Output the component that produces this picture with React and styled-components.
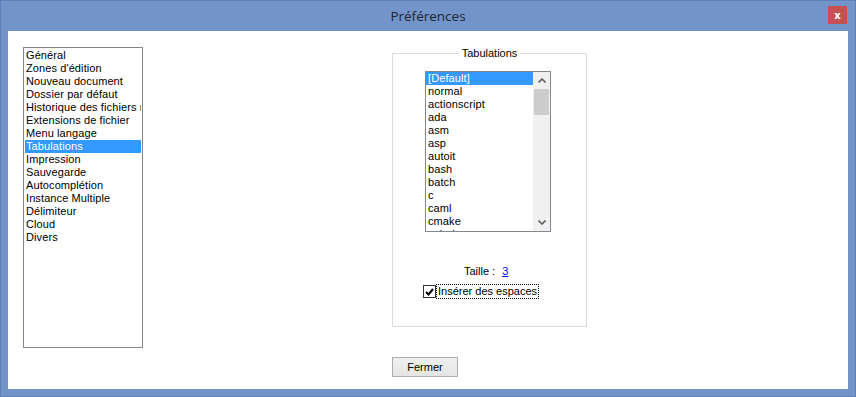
import styled, { createGlobalStyle } from 'styled-components'

const Global = createGlobalStyle`
  html, body {
    margin: 0;
    padding: 0;
    overflow: hidden;
    background: #7394c8;
  }
`

const Frame = styled.div`
  width: 856px;
  height: 397px;
  box-sizing: border-box;
  display: flex;
  flex-direction: column;
  background: #7394c8;
  box-shadow: inset 0 0 0 1px #5f80b8;
  font-family: "Liberation Sans", Arial, sans-serif;
  font-size: 11px;
  color: #000;
`

const TitleBar = styled.div`
  position: relative;
  height: 31px;
  flex-shrink: 0;
  display: flex;
  align-items: center;
  justify-content: center;
`

const Title = styled.div`
  font-family: "Open Sans", "Noto Sans", sans-serif;
  font-size: 13.5px;
  color: #1a2536;
  margin-top: 1px;
`

const CloseButton = styled.div`
  position: absolute;
  top: 6px;
  right: 9px;
  width: 19px;
  height: 18px;
  background: #c75050;
  display: flex;
  align-items: center;
  justify-content: center;
  color: #fff;
  font-family: "DejaVu Sans", sans-serif;
  font-weight: bold;
  font-size: 10px;
`

const Content = styled.div`
  flex: 1;
  margin: 0 8px 8px;
  background: #fff;
  padding: 16px 0 0 15px;
  display: flex;
  align-items: flex-start;
`

const SideList = styled.div`
  width: 120px;
  height: 301px;
  box-sizing: border-box;
  border: 1px solid #828790;
  padding: 1px;
  overflow: hidden;
`

const Row = styled.div`
  height: 13px;
  line-height: 13px;
  padding-left: ${p => p.$indent || 1}px;
  white-space: nowrap;
  overflow: hidden;
  letter-spacing: 0.1px;
  background: ${p => (p.$selected ? '#3399ff' : 'transparent')};
  color: ${p => (p.$selected ? '#fff' : '#000')};
`

const RightCol = styled.div`
  margin-left: 249px;
  display: flex;
  flex-direction: column;
  align-items: flex-start;
`

const Group = styled.fieldset`
  width: 195px;
  height: 280px;
  box-sizing: border-box;
  margin: 0;
  padding: 0;
  border: 1px solid #dcdcdc;
  display: flex;
  flex-direction: column;
  align-items: flex-start;
`

const Legend = styled.legend`
  margin: 0 auto;
  padding: 0 3px;
  line-height: 13px;
  height: 13px;
`

const LangBox = styled.div`
  margin: 11px 0 0 32px;
  width: 126px;
  height: 161px;
  box-sizing: border-box;
  border: 1px solid #828790;
  display: flex;
`

const LangItems = styled.div`
  flex: 1;
  overflow: hidden;
`

const ScrollBar = styled.div`
  width: 17px;
  background: #f0f0f0;
  display: flex;
  flex-direction: column;
`

const ScrollArrow = styled.div`
  height: 17px;
  display: flex;
  align-items: center;
  justify-content: center;
`

const Thumb = styled.div`
  height: 26px;
  margin: 0 1px;
  background: #cdcdcd;
`

const Track = styled.div`
  flex: 1;
`

const SizeRow = styled.div`
  margin: 33px 0 0 71px;
  display: flex;
  gap: 7px;
  line-height: 13px;
`

const Link = styled.span`
  color: #0000ee;
  text-decoration: underline;
`

const CheckRow = styled.div`
  margin: 6px 0 0 30px;
  display: flex;
  align-items: center;
`

const Box = styled.div`
  width: 13px;
  height: 13px;
  box-sizing: border-box;
  border: 1px solid #333;
  background: #fff;
  display: flex;
  align-items: center;
  justify-content: center;
`

const CheckLabel = styled.div`
  padding: 0 1px;
  height: 13px;
  line-height: 13px;
  border: 1px dotted #000;
`

const Button = styled.div`
  margin-top: 30px;
  width: 66px;
  height: 20px;
  box-sizing: border-box;
  border: 1px solid #adadad;
  background: linear-gradient(#f0f0f0, #e5e5e5);
  display: flex;
  align-items: center;
  justify-content: center;
`

const sections = [
  'Général', "Zones d'édition", 'Nouveau document', 'Dossier par défaut',
  'Historique des fichiers récents', 'Extensions de fichier', 'Menu langage',
  'Tabulations', 'Impression', 'Sauvegarde', 'Autocomplétion',
  'Instance Multiple', 'Délimiteur', 'Cloud', 'Divers',
]

const langs = [
  '[Default]', 'normal', 'actionscript', 'ada', 'asm', 'asp', 'autoit',
  'bash', 'batch', 'c', 'caml', 'cmake', 'cobol', 'coffeescript',
]

const Chevron = ({ down }) => (
  <svg width="8" height="5" viewBox="0 0 8 5">
    <path
      d={down ? 'M0.5 0.5 L4 4 L7.5 0.5' : 'M0.5 4.5 L4 1 L7.5 4.5'}
      fill="none"
      stroke="#606060"
      strokeWidth="1.6"
    />
  </svg>
)

export default function App() {
  return (
    <Frame>
      <Global />
      <TitleBar>
        <Title>Préférences</Title>
        <CloseButton>x</CloseButton>
      </TitleBar>
      <Content>
        <SideList>
          {sections.map(s => (
            <Row key={s} $selected={s === 'Tabulations'}>{s}</Row>
          ))}
        </SideList>
        <RightCol>
          <Group>
            <Legend>Tabulations</Legend>
            <LangBox>
              <LangItems>
                {langs.map(l => (
                  <Row key={l} $indent={2} $selected={l === '[Default]'}>{l}</Row>
                ))}
              </LangItems>
              <ScrollBar>
                <ScrollArrow><Chevron /></ScrollArrow>
                <Thumb />
                <Track />
                <ScrollArrow><Chevron down /></ScrollArrow>
              </ScrollBar>
            </LangBox>
            <SizeRow>
              <span>Taille :</span>
              <Link>3</Link>
            </SizeRow>
            <CheckRow>
              <Box>
                <svg width="9" height="8" viewBox="0 0 9 8">
                  <path d="M1 4 L3.5 6.5 L8 1" fill="none" stroke="#000" strokeWidth="2" />
                </svg>
              </Box>
              <CheckLabel>Insérer des espaces</CheckLabel>
            </CheckRow>
          </Group>
          <Button>Fermer</Button>
        </RightCol>
      </Content>
    </Frame>
  )
}
